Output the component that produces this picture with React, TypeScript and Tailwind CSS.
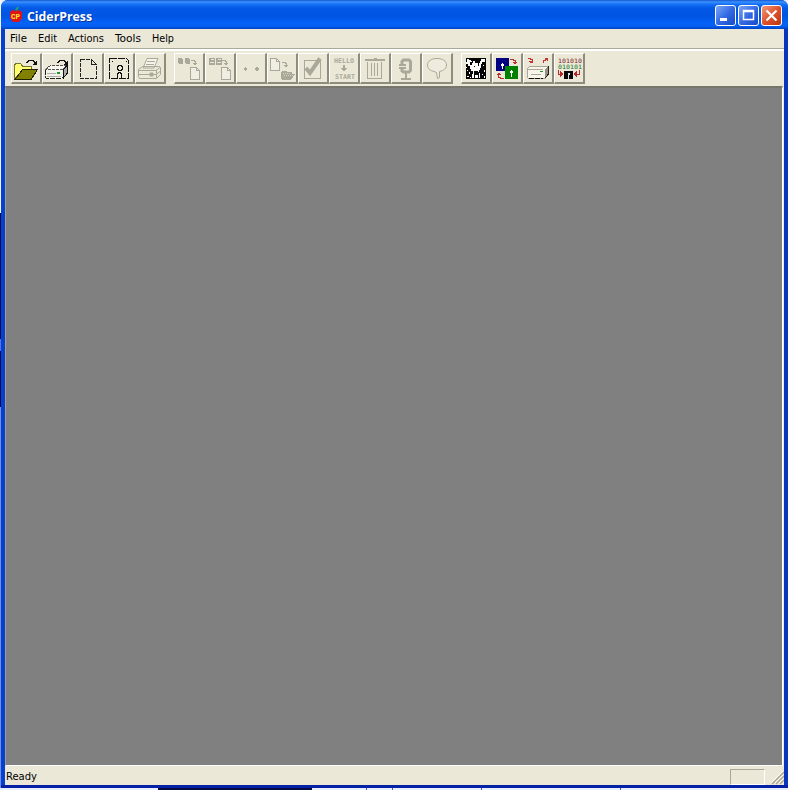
import React from "react";

type Kids = { children?: React.ReactNode };

function ToolButton({ children }: Kids) {
  return (
    <div className="h-[31px] w-[31px] shrink-0 border-t border-r-2 border-b-2 border-l border-t-white border-l-white border-r-[#8e8c7c] border-b-[#8e8c7c] bg-[#ebe8d8]">
      <svg className="-mt-px -ml-px block overflow-visible" width="31" height="31" viewBox="0 0 31 31" fill="none" shapeRendering="crispEdges">
        {children}
      </svg>
    </div>
  );
}

const G = "#aaa899";

function CurvedArrow() {
  return (
    <g>
      <path d="M15 9.500h1v-1h1v-1h5v1h1v1h1v1" stroke="#111" />
      <path d="M26 7v5h-5z" fill="#111" />
    </g>
  );
}

function GrayArrow({ x, y }: { x: number; y: number }) {
  return (
    <g transform={`translate(${x} ${y})`}>
      <path d="M0 .5h3v1h1v3" stroke={G} />
      <path d="M1.500 3h5L4 6z" fill={G} />
    </g>
  );
}

function Page({ x, y }: { x: number; y: number }) {
  return (
    <g transform={`translate(${x} ${y})`} stroke={G}>
      <path d="M.5 .5h6l3 3v9h-9z" fill="#f0eee2" />
      <path d="M6.500 .5v3h3" />
    </g>
  );
}

function OpenFolder() {
  return (
    <>
      <path d="M3.500 26V11.500h1v-1h5l2 2.500h9v4h-9z" fill="#ffff70" stroke="#77752a" />
      <path d="M11.500 16.500h15l-6 9.500h-16z" fill="#828000" stroke="#222200" />
      <CurvedArrow />
    </>
  );
}

function Drive() {
  return (
    <>
      <path d="M3.500 16.500l5-4h16l-4 4z" fill="#f8f8ee" stroke="#555" strokeDasharray="3 1" />
      <path d="M21 17l4-4.500v8l-4 5z" fill="#aaa" stroke="#111" />
      <rect x="3" y="17" width="18" height="9" rx="2" fill="#f4f3e9" />
      <path d="M3.500 17v7l1 1.500h15l1.500-1" stroke="#222" strokeDasharray="5 1" />
      <path d="M5 20.500h9M5 23.500h14" stroke="#aaa" />
      <path d="M15 20h3" stroke="#219629" strokeWidth="2" />
      <CurvedArrow />
    </>
  );
}

function NewDoc() {
  return (
    <>
      <path d="M7.500 6.500h11l5 5v14h-16z" stroke="#222" strokeDasharray="4 1" />
      <path d="M18.500 6.500v5h5" stroke="#222" />
    </>
  );
}

function Disk() {
  return (
    <>
      <path d="M5.500 5.500h17l2 2v18h-19z" stroke="#111" strokeDasharray="7 1" />
      <path d="M14 12.500h3v1h1v3h-1v1h-3v-1h-1v-3h1zM13.500 25v-5h1v-1h2v1h1v5" stroke="#111" />
      <path d="M8 8h1v1H8zM22 8h1v1h-1z" fill="#111" />
    </>
  );
}

function Printer() {
  return (
    <g stroke={G} shapeRendering="auto">
      <path d="M8 15l4-9.500h11l-4 9.500z" fill="#f6f4e9" />
      <path d="M12 8.500h8M11 11.500h8" />
      <path d="M3.500 16.500l4-3h17l1 1v7l-4 4h-17l-1-2zM4 17.500h17l4-3M4 21.500h17l4-3M21.500 17v8" />
      <path d="M15 20h3v3h-3z" fill={G} />
    </g>
  );
}

function FloppyPair({ slots }: { slots?: boolean }) {
  return (
    <>
      <path d={slots ? "M4 5h6v7H4zM11 5h6v7h-6z" : "M4 5h5v6H4zM11 5h5v6h-5z"} fill={G} />
      {slots ? <path d="M6 6.500h3M5 9.500h4M13 6.500h3M12 9.500h4" stroke="#ebe8d8" /> : <path d="M4 10.500h1M8 5.500h1M11 10.500h1M15 5.500h1" stroke="#ebe8d8" />}
      <GrayArrow x={17} y={7} />
      <Page x={16} y={14} />
    </>
  );
}

function PageToFolder() {
  return (
    <>
      <Page x={3} y={5} />
      <GrayArrow x={15} y={9} />
      <path d="M14 26v-7h1v-1h4l1 1h5v2h3l-4 6h-8z" fill={G} />
      <path d="M16 20.500h8M17 22.500h9" stroke="#d7d3c3" strokeDasharray="1 1" />
    </>
  );
}

function Check() {
  return (
    <>
      <path d="M6.500 7.500h16v18h-16z" stroke={G} />
      <path d="M8 15l4 5L22 5.500" stroke={G} strokeWidth="4" shapeRendering="auto" />
    </>
  );
}

function HelloStart() {
  return (
    <g fill={G} fontFamily="DejaVu Sans Mono, monospace" fontSize="6.500" fontWeight="bold">
      <text x="5" y="10" textLength="20" lengthAdjust="spacingAndGlyphs">HELLO</text>
      <path d="M14 12h2v3h2l-3 4-3-4h2z" />
      <text x="6" y="26" textLength="20" lengthAdjust="spacingAndGlyphs">START</text>
    </g>
  );
}

function Trash() {
  return (
    <g stroke={G}>
      <path d="M5 7h20M14 5.500h3" strokeWidth="2" />
      <path d="M7.500 9v16.500h14V9M11.500 10v13M14.500 10v13M17.500 10v13" />
    </g>
  );
}

function Clamp() {
  return (
    <g stroke={G}>
      <path d="M11 11V8.500L12.500 7h5.500l1.500 1.500v9L18 19h-5.500L11 18v-2" strokeWidth="3" shapeRendering="auto" />
      <path d="M8 12h7M8 15h7M15 20v6M10 26h10" strokeWidth="2" />
    </g>
  );
}

function Bubble() {
  return <path d="M12 18.500c-4-1-6.500-3-6.500-6.500 0-4 4-6.500 9.500-6.500s9.500 2.500 9.500 6.500c0 3.500-2.500 5.500-7 6.500v6l-2 1-1-6z" stroke={G} fill="#efecdf" shapeRendering="auto" />;
}

function DiskImage() {
  return (
    <>
      <path d="M5 5h20v21H5z" fill="#050505" />
      <path d="M6 6h2v1h2v1h4v2h5V8h1V6h4v3h-3v2h-1v4h-1v2h-1v3h1v5h-8v-4h1v-3h-2v-2h-1v-3H7v-2H5v-2h1z" fill="#fafafa" />
      <path d="M11 6h1v4h-1zM9 9h2v3H9zM13 13h1v1h-1zM13 18h4v1h1v6h-1v-3h-3v3h-1z" fill="#050505" />
      <path d="M15 5h1v1h-1zM17 6h2v1h-2zM17 10h1v3h-1z" fill="#050505" />
      <path d="M6 17h1v1H6zM8 19h1v2H8zM6 23h2v1H6zM9 24h1v1H9zM22 12h1v1h-1zM23 17h1v2h-1zM21 21h1v1h-1zM23 23h1v2h-1zM5 14h1v1H5z" fill="#fff" />
    </>
  );
}

function DiskConvert() {
  return (
    <>
      <path d="M4 5h13v13H4z" fill="#000080" />
      <path d="M13 13h13v13H13z" fill="#008000" />
      <path d="M10 10h1v1h1v2h-1v3h-1v-3H9v-2h1zM19 17h1v1h1v2h-1v4h-1v-4h-1v-2h1z" fill="white" />
      <path d="M18 6.500h3v1h2v3M12 25.500H8v-1H6v-3" stroke="#b63128" />
      <path d="M20 9h5l-2 3zM4 22h5l-2-3z" fill="#b63128" />
    </>
  );
}

function DriveArrows() {
  return (
    <>
      <path d="M4 16l3-3h19l-4 4v8H5l-1-1z" fill="#f7f5e9" stroke="#aaa797" />
      <path d="M22 17v8l3-4v-8z" fill="#949286" />
      <path d="M25.500 13v8l-3 4" stroke="#222" />
      <path d="M6 25.500h14" stroke="#111" strokeDasharray="5 1" />
      <path d="M5 16.500h15M8 21.500h10" stroke="#aaa797" />
      <path d="M17 18.500h3" stroke="#219629" />
      <path d="M5 5.500h2v1h2v2M20.500 10V7.500h2v-1h2" stroke="#c33630" />
      <path d="M6 8h4v-2v4h-3zM22 5h3v4z" fill="#c33630" />
    </>
  );
}

function Binary() {
  return (
    <>
      <g fontFamily="DejaVu Sans Mono, monospace" fontSize="6">
        <text x="4" y="9.500" fill="#7b241e" textLength="24" lengthAdjust="spacingAndGlyphs">101010</text>
        <text x="4" y="16" fill="#18752e" textLength="24" lengthAdjust="spacingAndGlyphs">010101</text>
      </g>
      <path d="M10 18h9v8h-9z" fill="#080808" />
      <path d="M14 20h2v2h-1v4h-1z" fill="#ddd" />
      <path d="M4.500 17v4h3M25.500 17v4h-3" stroke="#b52927" />
      <path d="M6 18l4 3-4 3zM23 18l-4 3 4 3z" fill="#b52927" />
    </>
  );
}

const groups: React.ReactNode[][] = [
  [<OpenFolder />, <Drive />, <NewDoc />, <Disk />, <Printer />],
  [
    <FloppyPair />,
    <FloppyPair slots />,
    <path d="M9 14h1v1h1v2h-1v1H9v-1H8v-2h1zM20 14h2v1h1v2h-1v1h-2v-1h-1v-2h1z" fill={G} />,
    <PageToFolder />,
    <Check />,
    <HelloStart />,
    <Trash />,
    <Clamp />,
    <Bubble />,
  ],
  [<DiskImage />, <DiskConvert />, <DriveArrows />, <Binary />],
];

const menus = [
  { label: "File", box: "w-7", len: 17 },
  { label: "Edit", box: "w-[30px]", len: 19 },
  { label: "Actions", box: "w-[47px]", len: 36 },
  { label: "Tools", box: "w-[37px]", len: 26 },
  { label: "Help", box: "w-8", len: 22 },
];

function UiText({ children, len }: { children: string; len: number }) {
  return (
    <svg className="block overflow-visible" width={len} height="14">
      <text x="0" y="11" fontFamily="DejaVu Sans Condensed, DejaVu Sans, sans-serif" fontSize="10.5" fill="#000" textLength={len} lengthAdjust="spacingAndGlyphs">
        {children}
      </text>
    </svg>
  );
}

function CaptionButton({ children, red }: Kids & { red?: boolean }) {
  return (
    <div className={`flex h-[21px] w-[21px] items-center justify-center rounded-[3px] border border-white bg-gradient-to-br ${red ? "from-[#f09a7c] via-[#df512b] to-[#bd3512]" : "from-[#7ca6f5] via-[#346be5] to-[#1749c6]"}`}>
      <svg className="shrink-0" width="19" height="19" viewBox="0 0 19 19" fill="none" stroke="white">{children}</svg>
    </div>
  );
}

export default function App() {
  return (
    <div className="flex h-[790px] w-[788px] flex-col overflow-hidden bg-[#e8eefc]">
      <div className="flex h-[788px]">
        <div className="w-px shrink-0">
          <div className="h-[213px] bg-[#f4f6ff]" />
          <div className="h-[126px] bg-[#000a50]" />
          <div className="h-3 bg-[#5274e6]" />
          <div className="h-[56px] bg-[#000a50]" />
          <div className="h-[381px] bg-[#7190ee]" />
        </div>
        <div className="flex w-[787px] flex-col rounded-t-[7px] border-b-[3px] border-b-[#0420a5] bg-[#0543d6]">
          <div className="flex h-[29px] shrink-0 items-center rounded-t-[7px] bg-[linear-gradient(180deg,#1557d0_0%,#3b91ff_7%,#1673f8_14%,#0359e5_28%,#0054e3_55%,#0562f7_80%,#0560f2_90%,#0042c5_100%)] pt-[2px] pr-[6px] pl-2">
            <svg className="block" width="14" height="17" viewBox="0 0 14 17">
              <path d="M6 3L8 0h2L8 4z" fill="#21a35b" />
              <path d="M1 5l3-2 3 1 3-1 3 2v6l-3 4H4l-3-4z" fill="#df1414" />
              <text x="2" y="12" fontSize="8" fontWeight="bold" fontFamily="Liberation Mono, monospace" fill="#ffe63a" textLength="9" lengthAdjust="spacingAndGlyphs">CP</text>
            </svg>
            <svg className="ml-[4px] block" width="70" height="18">
              <g fontFamily="Open Sans, sans-serif" fontWeight="bold" fontSize="13">
                <text x="1" y="15" fill="#05349c" textLength="65" lengthAdjust="spacingAndGlyphs" aria-hidden="true">CiderPress</text>
                <text x="0" y="14" fill="white" textLength="65" lengthAdjust="spacingAndGlyphs">CiderPress</text>
              </g>
            </svg>
            <div className="ml-auto flex gap-[2px]">
              <CaptionButton><path d="M4 13.500h7" strokeWidth="3" /></CaptionButton>
              <CaptionButton><path d="M4.500 4.500h10v9h-10zM4 5.500h11" strokeWidth="1.500" /></CaptionButton>
              <CaptionButton red><path d="M4.500 4.500l10 10M14.500 4.500l-10 10" strokeWidth="2.200" /></CaptionButton>
            </div>
          </div>
          <div className="flex h-[756px] border-x-4 border-l-[#0740cf] border-r-[#0736bb]">
            <div className="flex w-full flex-col bg-[#ebe8d8]">
              <div className="flex h-5 shrink-0 items-start border-b border-b-[#aaa99d] pt-[2px] pl-[5px]">
                {menus.map((m) => <div key={m.label} className={m.box}><UiText len={m.len}>{m.label}</UiText></div>)}
              </div>
              <div className="flex h-[37px] shrink-0 gap-2 border-t-2 border-t-white pt-[2px] pl-[6px]">
                {groups.map((g, i) => (
                  <div key={i} className="flex">{g.map((icon, j) => <ToolButton key={j}>{icon}</ToolButton>)}</div>
                ))}
              </div>
              <div className="mr-px h-[680px] shrink-0 border-t-2 border-r border-b border-l border-t-[#77766d] border-r-white border-b-white border-l-[#a09f94] bg-[#808080]" />
              <div className="flex h-[19px] items-start pt-[3px] pl-px">
                <UiText len={31}>Ready</UiText>
                <div className="ml-auto h-4 w-[35px] border border-t-[#aaa79a] border-r-white border-b-white border-l-[#aaa79a]" />
                <svg className="ml-[5px] block" width="14" height="16">
                  <path d="M2 15L14 3M6 15l8-8M10 15l4-4" stroke="#aaa693" strokeWidth="1.500" />
                  <path d="M1 14L13 2M5 14l8-8M9 14l4-4" stroke="white" />
                </svg>
              </div>
            </div>
          </div>
        </div>
      </div>
      <div className="flex h-[2px]">
        <div className="w-[158px] bg-[#e9edfc]" /><div className="w-[154px] bg-[#030b45]" />
        <div className="w-[54px]" /><div className="w-px bg-[#435bab]" /><div className="w-[25px]" /><div className="w-px bg-[#435bab]" />
        <div className="w-[88px]" /><div className="w-px bg-[#435bab]" /><div className="w-[138px]" /><div className="w-px bg-[#435bab]" />
      </div>
    </div>
  );
}
